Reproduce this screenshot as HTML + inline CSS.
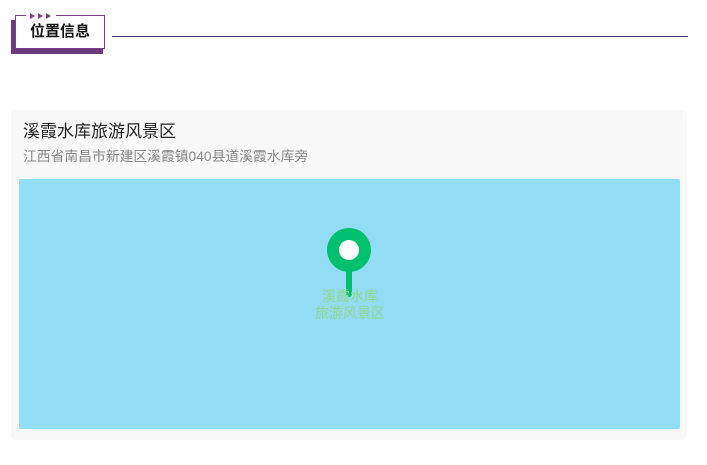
<!DOCTYPE html>
<html><head><meta charset="utf-8"><style>
body{margin:0;width:707px;height:465px;background:#fff;font-family:"Liberation Sans","Noto Sans CJK SC",sans-serif;position:relative;overflow:hidden}
.a{position:absolute}
</style></head><body>
<div class="a" style="left:11px;top:20px;width:92px;height:34px;background:#6b3a78"></div>
<div class="a" style="left:15px;top:15px;width:88px;height:32px;background:#fff;border:1px solid #7a3f86"></div>
<div class="a" style="left:26px;top:13px;width:30px;height:5px;background:#fff"></div>
<svg class="a" style="left:30px;top:13px" width="24" height="6"><polygon points="0,0 5,3 0,6" fill="#7a3f86"/><polygon points="8,0 13,3 8,6" fill="#7a3f86"/><polygon points="16,0 21,3 16,6" fill="#7a3f86"/></svg>
<div class="a" style="left:15px;top:23px;width:90px;text-align:center;font-size:15px;font-weight:bold;color:#111;line-height:18px">位置信息</div>
<div class="a" style="left:112px;top:36px;width:576px;height:1px;background:#3a3a6a"></div>
<div class="a" style="left:11px;top:110px;width:676px;height:330px;background:#f8f8f8;border-radius:5px"></div>
<div class="a" style="left:23px;top:122px;font-size:17px;color:#222;line-height:20px">溪霞水库旅游风景区</div>
<div class="a" style="left:23px;top:149px;font-size:13.8px;color:#888;line-height:16px">江西省南昌市新建区溪霞镇040县道溪霞水库旁</div>
<div class="a" style="left:19px;top:179px;width:661px;height:250px;background:#92ddf3;border-radius:2px"></div>
<svg class="a" style="left:320px;top:225px" width="60" height="80">
<rect x="26" y="40" width="6" height="32" rx="3" fill="#00c070"/>
<circle cx="29" cy="25" r="22" fill="#00c070"/>
<circle cx="29" cy="25" r="10" fill="#fff"/>
</svg>
<div class="a" style="left:300px;top:288px;width:100px;text-align:center;font-size:14px;line-height:17px;color:#8fd88f">溪霞水库<br>旅游风景区</div>
</body></html>
